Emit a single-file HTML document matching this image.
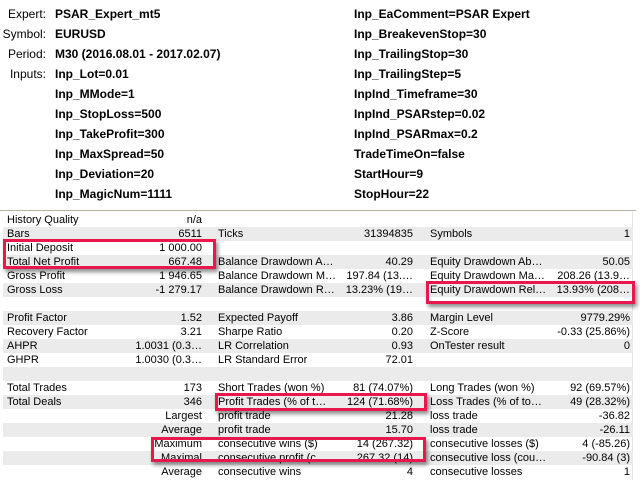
<!DOCTYPE html>
<html><head><meta charset="utf-8"><style>
body{margin:0;width:640px;height:480px;background:#fff;position:relative;overflow:hidden;font-family:"Liberation Sans","DejaVu Sans",sans-serif;color:#000}
.t{position:absolute;white-space:nowrap;font-size:12px;line-height:20px}
.l{width:46px;text-align:right;left:0}
.b{font-weight:bold}
.row{position:absolute;left:3px;width:630px;height:14px}
.g{background:#ebebeb}
.c{position:absolute;font-size:11px;line-height:14px;white-space:nowrap}
.r{text-align:right}
.box{position:absolute;border:3px solid #e8174c;box-shadow:2px 3px 4px rgba(0,0,0,.45)}
</style></head><body>
<div class="t l" style="top:4px">Expert:</div><div class="t b" style="left:55px;top:4px">PSAR_Expert_mt5</div>
<div class="t l" style="top:24px">Symbol:</div><div class="t b" style="left:55px;top:24px">EURUSD</div>
<div class="t l" style="top:44px">Period:</div><div class="t b" style="left:55px;top:44px">M30 (2016.08.01 - 2017.02.07)</div>
<div class="t l" style="top:64px">Inputs:</div><div class="t b" style="left:55px;top:64px">Inp_Lot=0.01</div>
<div class="t b" style="left:55px;top:84px">Inp_MMode=1</div>
<div class="t b" style="left:55px;top:104px">Inp_StopLoss=500</div>
<div class="t b" style="left:55px;top:124px">Inp_TakeProfit=300</div>
<div class="t b" style="left:55px;top:144px">Inp_MaxSpread=50</div>
<div class="t b" style="left:55px;top:164px">Inp_Deviation=20</div>
<div class="t b" style="left:55px;top:184px">Inp_MagicNum=1111</div>
<div class="t b" style="left:354px;top:4px">Inp_EaComment=PSAR Expert</div>
<div class="t b" style="left:354px;top:24px">Inp_BreakevenStop=30</div>
<div class="t b" style="left:354px;top:44px">Inp_TrailingStop=30</div>
<div class="t b" style="left:354px;top:64px">Inp_TrailingStep=5</div>
<div class="t b" style="left:354px;top:84px">InpInd_Timeframe=30</div>
<div class="t b" style="left:354px;top:104px">InpInd_PSARstep=0.02</div>
<div class="t b" style="left:354px;top:124px">InpInd_PSARmax=0.2</div>
<div class="t b" style="left:354px;top:144px">TradeTimeOn=false</div>
<div class="t b" style="left:354px;top:164px">StartHour=9</div>
<div class="t b" style="left:354px;top:184px">StopHour=22</div>
<div style="position:absolute;left:0;top:210px;width:636px;height:1px;background:#b4b0a4"></div>
<div style="position:absolute;left:632px;top:212px;width:1px;height:268px;background:#e4e4e4"></div>

<div class="row g" style="top:227px"></div>
<div class="row g" style="top:255px"></div>
<div class="row g" style="top:283px"></div>
<div class="row g" style="top:311px"></div>
<div class="row g" style="top:339px"></div>
<div class="row g" style="top:367px"></div>
<div class="row g" style="top:395px"></div>
<div class="row g" style="top:423px"></div>
<div class="row g" style="top:451px"></div>

<div id="rows"></div>
<script>
var R=[
["History Quality","n/a","","","",""],
["Bars","6511","Ticks","31394835","Symbols","1"],
["Initial Deposit","1 000.00","","","",""],
["Total Net Profit","667.48","Balance Drawdown A…","40.29","Equity Drawdown Ab…","50.05"],
["Gross Profit","1 946.65","Balance Drawdown M…","197.84 (13.…","Equity Drawdown Ma…","208.26 (13.9…"],
["Gross Loss","-1 279.17","Balance Drawdown R…","13.23% (19…","Equity Drawdown Rel…","13.93% (208…"],
["","","","","",""],
["Profit Factor","1.52","Expected Payoff","3.86","Margin Level","9779.29%"],
["Recovery Factor","3.21","Sharpe Ratio","0.20","Z-Score","-0.33 (25.86%)"],
["AHPR","1.0031 (0.3…","LR Correlation","0.93","OnTester result","0"],
["GHPR","1.0030 (0.3…","LR Standard Error","72.01","",""],
["","","","","",""],
["Total Trades","173","Short Trades (won %)","81 (74.07%)","Long Trades (won %)","92 (69.57%)"],
["Total Deals","346","Profit Trades (% of t…","124 (71.68%)","Loss Trades (% of to…","49 (28.32%)"],
["","Largest","profit trade","21.28","loss trade","-36.82"],
["","Average","profit trade","15.70","loss trade","-26.11"],
["","Maximum","consecutive wins ($)","14 (267.32)","consecutive losses ($)","4 (-85.26)"],
["","Maximal","consecutive profit (c…","267.32 (14)","consecutive loss (cou…","-90.84 (3)"],
["","Average","consecutive wins","4","consecutive losses","1"]];
var h="";
R.forEach(function(r,i){var y=213+i*14;
h+='<div class="c" style="left:7px;top:'+y+'px">'+r[0]+'</div>';
h+='<div class="c r" style="right:438px;top:'+y+'px">'+r[1]+'</div>';
h+='<div class="c" style="left:218px;top:'+y+'px">'+r[2]+'</div>';
h+='<div class="c r" style="right:227px;top:'+y+'px">'+r[3]+'</div>';
h+='<div class="c" style="left:430px;top:'+y+'px">'+r[4]+'</div>';
h+='<div class="c r" style="right:10px;top:'+y+'px">'+r[5]+'</div>';});
document.getElementById("rows").innerHTML=h;
</script>
<div class="box" style="left:3px;top:239px;width:207px;height:24px"></div>
<div class="box" style="left:426px;top:281px;width:203px;height:17px"></div>
<div class="box" style="left:215px;top:393px;width:206px;height:12px"></div>
<div class="box" style="left:151px;top:437px;width:269px;height:19px"></div>
</body></html>
